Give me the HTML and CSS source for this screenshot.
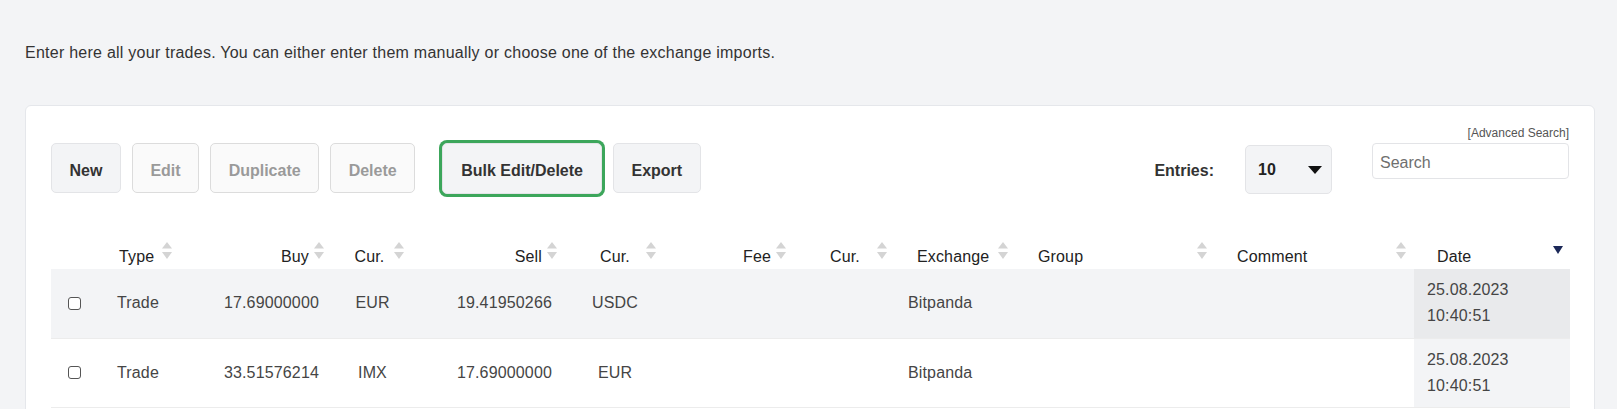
FILE: index.html
```html
<!DOCTYPE html>
<html lang="en">
<head>
<meta charset="utf-8">
<title>Trades</title>
<link rel="stylesheet" href="styles.css">
</head>
<body>
<div class="page">
  <p class="intro">Enter here all your trades. You can either enter them manually or choose one of the exchange imports.</p>
  <div class="card">
    <div class="toolbar">
      <div class="actions">
        <button class="btn">New</button>
        <button class="btn disabled">Edit</button>
        <button class="btn disabled">Duplicate</button>
        <button class="btn disabled">Delete</button>
        <button class="btn highlight">Bulk Edit/Delete</button>
        <button class="btn">Export</button>
      </div>
      <div class="filters">
        <span class="entries-label">Entries:</span>
        <div class="select">
          <span>10</span>
          <svg class="caret" width="14" height="8" viewBox="0 0 14 8"><polygon points="0,0 14,0 7,8" fill="#111"/></svg>
        </div>
        <div class="search">
          <a class="adv-link">[Advanced Search]</a>
          <input class="search-input" type="text" placeholder="Search">
        </div>
      </div>
    </div>

    <table class="grid">
      <colgroup>
        <col style="width:50px">
        <col style="width:76px">
        <col style="width:152px">
        <col style="width:80px">
        <col style="width:153px">
        <col style="width:99px">
        <col style="width:130px">
        <col style="width:101px">
        <col style="width:121px">
        <col style="width:199px">
        <col style="width:202px">
        <col style="width:156px">
      </colgroup>
      <thead>
        <tr>
          <th></th>
          <th class="l first">Type<svg class="sort" viewBox="0 0 10 17"><polygon points="5,0 10,6.5 0,6.5"/><polygon points="0,10 10,10 5,17"/></svg></th>
          <th class="r">Buy<svg class="sort" viewBox="0 0 10 17"><polygon points="5,0 10,6.5 0,6.5"/><polygon points="0,10 10,10 5,17"/></svg></th>
          <th class="c cur1">Cur.<svg class="sort" viewBox="0 0 10 17"><polygon points="5,0 10,6.5 0,6.5"/><polygon points="0,10 10,10 5,17"/></svg></th>
          <th class="r">Sell<svg class="sort" viewBox="0 0 10 17"><polygon points="5,0 10,6.5 0,6.5"/><polygon points="0,10 10,10 5,17"/></svg></th>
          <th class="c">Cur.<svg class="sort" viewBox="0 0 10 17"><polygon points="5,0 10,6.5 0,6.5"/><polygon points="0,10 10,10 5,17"/></svg></th>
          <th class="r">Fee<svg class="sort" viewBox="0 0 10 17"><polygon points="5,0 10,6.5 0,6.5"/><polygon points="0,10 10,10 5,17"/></svg></th>
          <th class="c">Cur.<svg class="sort" viewBox="0 0 10 17"><polygon points="5,0 10,6.5 0,6.5"/><polygon points="0,10 10,10 5,17"/></svg></th>
          <th class="l">Exchange<svg class="sort" viewBox="0 0 10 17"><polygon points="5,0 10,6.5 0,6.5"/><polygon points="0,10 10,10 5,17"/></svg></th>
          <th class="l">Group<svg class="sort" viewBox="0 0 10 17"><polygon points="5,0 10,6.5 0,6.5"/><polygon points="0,10 10,10 5,17"/></svg></th>
          <th class="l">Comment<svg class="sort wide" viewBox="0 0 10 17"><polygon points="5,0 10,6.5 0,6.5"/><polygon points="0,10 10,10 5,17"/></svg></th>
          <th class="l datecol">Date<svg class="sorted" viewBox="0 0 10 8"><polygon points="0,0 10,0 5,8"/></svg></th>
        </tr>
      </thead>
      <tbody>
        <tr class="odd">
          <td class="chk"><span class="box"></span></td>
          <td class="l first">Trade</td>
          <td class="r">17.69000000</td>
          <td class="c">EUR</td>
          <td class="r">19.41950266</td>
          <td class="c">USDC</td>
          <td class="r"></td>
          <td class="c"></td>
          <td class="l">Bitpanda</td>
          <td class="l"></td>
          <td class="l"></td>
          <td class="l date">25.08.2023<br>10:40:51</td>
        </tr>
        <tr class="even">
          <td class="chk"><span class="box"></span></td>
          <td class="l first">Trade</td>
          <td class="r">33.51576214</td>
          <td class="c">IMX</td>
          <td class="r">17.69000000</td>
          <td class="c">EUR</td>
          <td class="r"></td>
          <td class="c"></td>
          <td class="l">Bitpanda</td>
          <td class="l"></td>
          <td class="l"></td>
          <td class="l date">25.08.2023<br>10:40:51</td>
        </tr>
      </tbody>
    </table>
  </div>
</div>
</body>
</html>
```

FILE: styles.css
```css
* { box-sizing: border-box; }

html, body {
  margin: 0;
  padding: 0;
  background: #f3f4f6;
  font-family: "Liberation Sans", Arial, Helvetica, sans-serif;
  color: #333;
  overflow: hidden;
}

.page {
  padding: 0 22px 0 25px;
}

.intro {
  margin: 0;
  padding-top: 44px;
  height: 105px;
  font-size: 16px;
  letter-spacing: 0.25px;
  line-height: 18px;
  color: #333;
}

.card {
  background: #fff;
  border: 1px solid #e5e7eb;
  border-radius: 6px;
  padding: 20px 25px 40px 25px;
  min-height: 400px;
}

.toolbar {
  display: flex;
  align-items: flex-start;
}

.actions {
  display: flex;
  align-items: flex-start;
  gap: 11px;
  margin-top: 17px;
}

.btn {
  height: 50px;
  padding: 5px 17.5px 0 17.5px;
  border: 1px solid #e3e4e7;
  border-radius: 5px;
  background: #f3f4f6;
  font-family: inherit;
  font-size: 16px;
  font-weight: bold;
  color: #333;
}

.btn.disabled {
  background: #fafafa;
  border-color: #dcdcdc;
  color: #9a9a9a;
}

.btn.highlight {
  height: 51px;
  margin-left: 16px;
  padding: 5px 18px 0 18px;
  box-shadow: 0 0 0 3px #3ca65b;
}

.filters {
  margin-left: auto;
  display: flex;
  align-items: flex-start;
}

.entries-label {
  margin-top: 35px;
  font-size: 16px;
  font-weight: bold;
  line-height: 20px;
  color: #333;
}

.select {
  margin: 19px 0 0 31px;
  width: 87px;
  height: 49px;
  display: flex;
  align-items: center;
  justify-content: space-between;
  padding: 0 9px 0 12px;
  background: #f3f4f6;
  border: 1px solid #e3e4e7;
  border-radius: 5px;
  font-size: 16px;
  font-weight: bold;
  color: #222;
}

.search {
  margin-left: 40px;
  width: 197px;
  display: flex;
  flex-direction: column;
  align-items: flex-end;
}

.adv-link {
  font-size: 12px;
  line-height: 14px;
  color: #555;
  margin: 0 0 3px 0;
  height: 14px;
}

.search-input {
  width: 197px;
  height: 36px;
  border: 1px solid #e3e4e7;
  border-radius: 4px;
  padding: 3px 7px 0 7px;
  font-family: inherit;
  font-size: 16px;
  color: #333;
  background: #fff;
}

.search-input::placeholder {
  color: #6f6f6f;
}

.grid {
  margin-top: 46px;
  width: 1519px;
  table-layout: fixed;
  border-collapse: collapse;
  font-size: 16px;
  letter-spacing: 0.15px;
}

.grid th {
  position: relative;
  font-weight: normal;
  color: #222;
  line-height: 18px;
  padding: 8px 0 3px 0;
  white-space: nowrap;
}

.grid th.l { text-align: left; padding-left: 25px; }
.grid th.first { padding-left: 18px; }
.grid th.r { text-align: right; padding-right: 20px; }
.grid th.c { text-align: center; padding-left: 10px; padding-right: 3px; }
.grid th.cur1 { padding-left: 4px; padding-right: 3px; }
.grid th.datecol { padding-left: 23px; }

.sort {
  position: absolute;
  right: 5px;
  top: 2px;
  width: 10px;
  height: 17px;
  fill: #d4d4d4;
}

.sort.wide { right: 8px; }

.sorted {
  position: absolute;
  right: 7px;
  top: 6px;
  width: 10px;
  height: 8px;
  fill: #1b2858;
}

.grid td {
  height: 69px;
  padding: 0;
  color: #454545;
  line-height: 26px;
  vertical-align: middle;
  white-space: nowrap;
}

.grid tbody tr {
  border-bottom: 1px solid #ececec;
}

.grid tr.odd td { background: #f3f4f6; }
.grid tr.odd td.date { background: #e9eaec; }
.grid tr.even td.date { background: #f3f4f6; }

.grid td.l { text-align: left; padding-left: 16px; }
.grid td.date { padding-left: 13px; }
.grid td.r { text-align: right; padding-right: 10px; }
.grid td.c { text-align: center; padding-left: 10px; padding-right: 3px; }
.grid td.chk { padding-left: 17px; }

.box {
  display: block;
  width: 13px;
  height: 13px;
  border: 1.5px solid #555;
  border-radius: 3px;
  background: #fff;
}
```
